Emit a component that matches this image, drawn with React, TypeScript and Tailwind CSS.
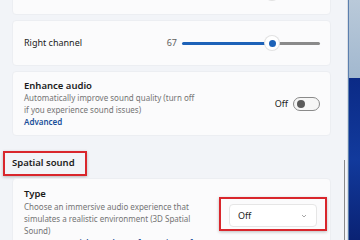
import React from 'react'

function Slider({ value }: { value: number }) {
    return (
        <div className="flex items-center gap-[5px]">
            <span className="w-[22px] text-right text-[9px] text-[#5f5f5f]">{value}</span>
            <div className="relative h-[14px] w-[138px]">
                <div className="absolute left-0 top-[6px] h-[3px] w-[90px] rounded-full bg-[#1d62b8]" />
                <div className="absolute right-0 top-[6px] h-[3px] w-[42px] rounded-full bg-[#8a8a8a]" />
                <div className="absolute left-[83px] top-0 flex h-[14px] w-[14px] items-center justify-center rounded-full bg-white shadow-[0_0_0_1px_#e2e2e2]">
                    <div className="h-[7px] w-[7px] rounded-full bg-[#1d62b8]" />
                </div>
            </div>
        </div>
    )
}

export default function App() {
    return (
        <div className="flex h-[240px] w-[360px] overflow-hidden bg-[#f2f4f8] font-['Noto_Sans',sans-serif] text-[#1b1b1b]">
            <div className="flex w-[347px] flex-col">
                <div className="flex flex-col gap-[5px] pl-[12px] pr-[16px]">
                    {/* top card, mostly scrolled out */}
                    <div className="-mt-[30px] flex h-[45px] items-center justify-between rounded-[4px] border border-[#eceef2] bg-[#fbfbfc] pl-[11px] pr-[10px]">
                        <span className="text-[9px]">Left channel</span>
                        <Slider value={67} />
                    </div>
                    <div className="flex h-[46px] items-center justify-between rounded-[4px] border border-[#eceef2] bg-[#fbfbfc] pl-[11px] pr-[10px]">
                        <span className="text-[9px]">Right channel</span>
                        <Slider value={67} />
                    </div>
                    <div className="flex h-[65px] items-center justify-between rounded-[4px] border border-[#eceef2] bg-[#fbfbfc] pl-[11px] pr-[10px]">
                        <div className="flex flex-col">
                            <span className="text-[9.5px] font-semibold leading-[13px]">Enhance audio</span>
                            <span className="w-[172px] text-[8px] leading-[12px] text-[#747474]">
                                Automatically improve sound quality (turn off if you experience sound issues)
                            </span>
                            <span className="text-[8px] font-semibold leading-[12px] text-[#1a4f9a]">Advanced</span>
                        </div>
                        <div className="flex items-center gap-[5px]">
                            <span className="text-[9px]">Off</span>
                            <div className="flex h-[14px] w-[27px] items-center rounded-full border border-[#8a8a8a] bg-[#f6f6f6] pl-[3px]">
                                <div className="h-[8px] w-[8px] rounded-full bg-[#5a5a5a]" />
                            </div>
                        </div>
                    </div>
                </div>
                <div className="mt-[15px] flex">
                    <div className="ml-[3px] flex h-[25px] w-[84px] items-center border-2 border-[#d9262c] pl-[7px] shadow-[0_1px_3px_rgba(0,0,0,0.25)]">
                        <span className="text-[9.5px] font-semibold">Spatial sound</span>
                    </div>
                </div>
                <div className="mt-[2px] pl-[12px] pr-[16px]">
                    <div className="flex justify-between rounded-[4px] border border-[#eceef2] bg-[#fbfbfc] pl-[11px] pr-[3px] pt-[8px]">
                        <div className="flex flex-col">
                            <span className="text-[9.5px] font-semibold leading-[14px]">Type</span>
                            <span className="w-[175px] text-[8px] leading-[12px] text-[#747474]">
                                Choose an immersive audio experience that simulates a realistic environment (3D Spatial Sound)
                            </span>
                            <span className="whitespace-nowrap text-[8px] font-semibold leading-[12px] text-[#1a4f9a]">
                                Get more spatial sound apps from Microsoft Store
                            </span>
                        </div>
                        <div className="mt-[10px] h-[34px] w-[108px] shrink-0 border-2 border-[#d9262c] px-[8px] pt-[5px] shadow-[0_1px_3px_rgba(0,0,0,0.25)]">
                            <div className="flex h-[23px] items-center justify-between rounded-[4px] border border-[#e6e6e6] bg-white pl-[8px] pr-[8px]">
                                <span className="text-[9px]">Off</span>
                                <svg width="8" height="8" viewBox="0 0 16 16" fill="none" stroke="#8a8a8a" strokeWidth="1.5"><path d="M4 6l4 4 4-4" /></svg>
                            </div>
                        </div>
                    </div>
                </div>
            </div>
            <div className="relative w-[1px] bg-[#d9dde4]">
                <div className="absolute -left-[3px] top-[160px] h-[80px] w-[1px] bg-[#8a8a8a]" />
            </div>
            <div className="flex flex-1 flex-col border-l border-[#5b7fae]">
                <div className="h-[78px] bg-gradient-to-b from-[#b9c9d9] to-[#a2b8cf]" />
                <div className="flex-1 bg-gradient-to-b from-[#0b2a86] via-[#123a9c] to-[#0a2274]" />
            </div>
        </div>
    )
}
